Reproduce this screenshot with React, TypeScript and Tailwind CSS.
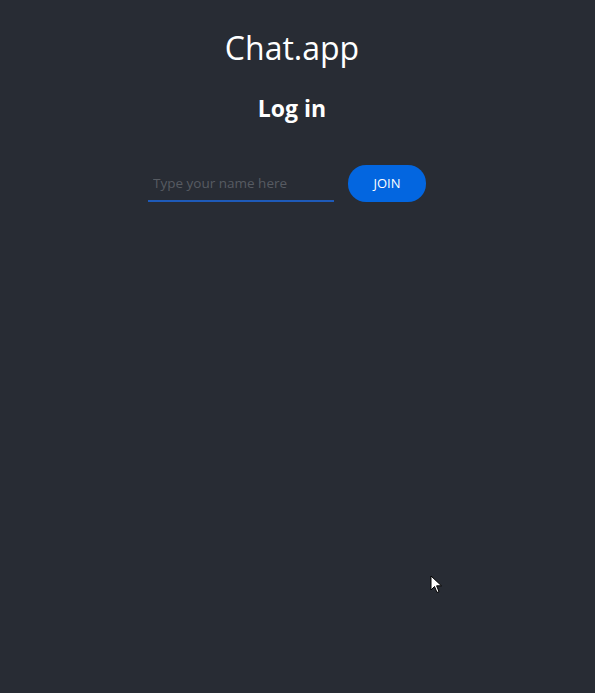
import { useState } from "react";

export default function App() {
  const [name, setName] = useState("");

  return (
    <div
      className="relative flex min-h-[693px] flex-col items-center bg-[#282c34] pr-[11px] text-white"
      style={{ fontFamily: '"Open Sans", "Liberation Sans", sans-serif' }}
    >
      <h1 className="mt-[24px] text-[32px] leading-[48px] font-normal">Chat.app</h1>
      <h2 className="mt-[18px] text-[23px] leading-[36px] font-bold">Log in</h2>

      <form
        className="mr-[10px] mt-[39px] flex items-center gap-[14px]"
        onSubmit={(e) => e.preventDefault()}
      >
        <input
          type="text"
          value={name}
          onChange={(e) => setName(e.target.value)}
          placeholder="Type your name here"
          className="h-[37px] w-[186px] border-b-2 border-[#1e5ab8] bg-transparent px-[5px] text-[13.5px] text-white outline-none placeholder:text-[#575b62]"
        />
        <button
          type="submit"
          className="h-[37px] w-[78px] rounded-[18px] bg-[#0366e0] text-[13px] text-white"
        >
          JOIN
        </button>
      </form>

      {/* mouse pointer captured in the screenshot */}
      <svg
        className="pointer-events-none absolute left-[430px] top-[575px]"
        width="13"
        height="20"
        viewBox="0 0 13 20"
      >
        <path
          d="M1 1 L1 15 L4.5 11.5 L7 17.5 L9 16.6 L6.6 10.8 L11.5 10.8 Z"
          fill="#ffffff"
          stroke="#000000"
          strokeWidth="1"
          strokeLinejoin="round"
        />
      </svg>
    </div>
  );
}
